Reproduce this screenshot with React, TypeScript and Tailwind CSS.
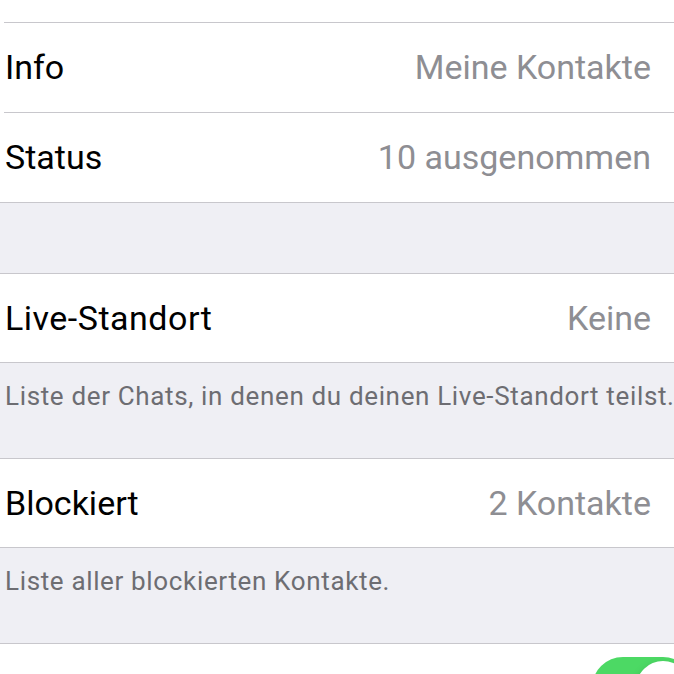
import React from "react";

type Row = {
  label: string;
  value: string;
  inset?: boolean;
};

const topRows: Row[] = [
  { label: "Info", value: "Meine Kontakte", inset: true },
  { label: "Status", value: "10 ausgenommen" },
];

function SettingsRow({ label, value, inset }: Row) {
  return (
    <div className="bg-white">
      <div className="h-[89px] flex items-center justify-between pl-[5px] pr-[23px]">
        <span className="text-[34px] text-black">{label}</span>
        <span className="text-[34px] text-[#8e8e93]">{value}</span>
      </div>
      <div className={inset ? "ml-[4px] h-px bg-[#c8c7cc]" : "h-px bg-[#c8c7cc]"} />
    </div>
  );
}

function Footer({ text }: { text: string }) {
  return (
    <div className="h-[96px] bg-[#efeff4] border-b border-[#c8c7cc] pl-[5px] pt-[17px]">
      <p className="text-[26px] leading-[32px] tracking-[0.65px] text-[#6d6d72] whitespace-nowrap">{text}</p>
    </div>
  );
}

export default function App() {
  return (
    <div
      className="w-[674px] h-[674px] overflow-hidden bg-[#efeff4]"
      style={{ fontFamily: "Roboto, 'Noto Sans', sans-serif" }}
    >
      {/* row cut off at the top */}
      <div className="bg-white">
        <div className="h-[22px]" />
        <div className="ml-[4px] h-px bg-[#c8c7cc]" />
      </div>

      {topRows.map((r) => (
        <SettingsRow key={r.label} {...r} />
      ))}

      <div className="h-[71px] border-b border-[#c8c7cc]" />

      <div className="bg-white h-[89px] flex items-center justify-between pl-[5px] pr-[23px] border-b border-[#c8c7cc]">
        <span className="text-[34px] tracking-[0.5px] text-black">Live-Standort</span>
        <span className="text-[34px] text-[#8e8e93]">Keine</span>
      </div>
      <Footer text="Liste der Chats, in denen du deinen Live-Standort teilst." />

      <div className="bg-white h-[89px] flex items-center justify-between pl-[5px] pr-[23px] border-b border-[#c8c7cc]">
        <span className="text-[34px] text-black">Blockiert</span>
        <span className="text-[34px] text-[#8e8e93]">2 Kontakte</span>
      </div>
      <Footer text="Liste aller blockierten Kontakte." />

      {/* toggle row, mostly below the fold */}
      <div className="bg-white h-[88px] flex items-center justify-between pl-[5px]">
        <span className="text-[34px] text-black">Lesebestätigungen</span>
        <div className="mr-[-20px] w-[102px] h-[62px] shrink-0 rounded-full bg-[#4cd964] p-[4px] flex justify-end">
          <div className="w-[54px] h-[54px] rounded-full bg-white shadow-[0_3px_8px_rgba(0,0,0,0.15),0_1px_1px_rgba(0,0,0,0.16)]" />
        </div>
      </div>
    </div>
  );
}
